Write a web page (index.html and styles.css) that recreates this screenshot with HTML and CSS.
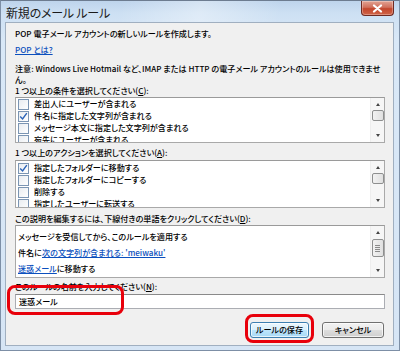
FILE: index.html
```html
<!DOCTYPE html>
<html lang="ja">
<head>
<meta charset="utf-8">
<link rel="stylesheet" href="styles.css">
</head>
<body>
<div class="window">
  <div class="titlebar">
    <span class="title">新規のメール ルール</span>
    <span class="close"><svg width="11" height="9" viewBox="0 0 11 9"><path d="M2 1.5 L9 7.5 M9 1.5 L2 7.5" stroke="#fff" stroke-width="2.2" stroke-linecap="round"/></svg></span>
  </div>
  <div class="client">
    <p class="row r1">POP 電子メール アカウントの新しいルールを作成します。</p>
    <p class="row r1"><a class="link">POP とは?</a></p>
    <p class="note">注意: Windows Live Hotmail など、IMAP または HTTP の電子メール アカウントのルールは使用できませ<br>ん。</p>
    <p class="label lc">1 つ以上の条件を選択してください(<u>C</u>):</p>
    <div class="listbox lb1">
      <ul class="items">
        <li><span class="cb"></span>差出人にユーザーが含まれる</li>
        <li><span class="cb on"><svg width="9" height="9" viewBox="0 0 9 9"><path d="M1.2 4.6 L3.6 7 L7.8 1.2" fill="none" stroke="#2a63b8" stroke-width="1.4"/></svg></span>件名に指定した文字列が含まれる</li>
        <li><span class="cb"></span>メッセージ本文に指定した文字列が含まれる</li>
        <li><span class="cb"></span>宛先にユーザーが含まれる</li>
      </ul>
      <div class="sb">
        <span class="arr up"></span>
        <span class="thumb"></span>
        <span class="fill"></span>
        <span class="arr dn"></span>
      </div>
    </div>
    <p class="label la">1 つ以上のアクションを選択してください(<u>A</u>):</p>
    <div class="listbox lb2">
      <ul class="items">
        <li><span class="cb on"><svg width="9" height="9" viewBox="0 0 9 9"><path d="M1.2 4.6 L3.6 7 L7.8 1.2" fill="none" stroke="#2a63b8" stroke-width="1.4"/></svg></span>指定したフォルダーに移動する</li>
        <li><span class="cb"></span>指定したフォルダーにコピーする</li>
        <li><span class="cb"></span>削除する</li>
        <li><span class="cb"></span>指定したユーザーに転送する</li>
      </ul>
      <div class="sb">
        <span class="arr up"></span>
        <span class="thumb"></span>
        <span class="fill"></span>
        <span class="arr dn"></span>
      </div>
    </div>
    <p class="label ld">この説明を編集するには、下線付きの単語をクリックしてください(<u>D</u>):</p>
    <div class="listbox desc">
      <div class="desc-text">
        <p>メッセージを受信してから、このルールを適用する</p>
        <p>件名に<a class="link">次の文字列が含まれる: 'meiwaku'</a></p>
        <p><a class="link">迷惑メール</a>に移動する</p>
      </div>
      <div class="sb sb-desc">
        <span class="arr up"></span>
        <span class="thumb big"><i></i><i></i><i></i><i></i></span>
        <span class="fill"></span>
        <span class="arr dn"></span>
      </div>
    </div>
    <p class="label ln">このルールの名前を入力してください(<u>N</u>):</p>
    <div class="input">迷惑メール</div>
    <div class="buttons">
      <span class="btn primary">ルールの保存</span>
      <span class="btn">キャンセル</span>
    </div>
  </div>
  <div class="mark mark1"></div>
  <div class="mark mark2"></div>
</div>
</body>
</html>
```
FILE: styles.css
```css
* { box-sizing: border-box; }
html, body { margin: 0; padding: 0; }
body {
  font-family: "Noto Sans CJK JP", "Noto Sans", sans-serif;
  font-size: 8.1px;
  font-weight: 500;
  font-feature-settings: "palt";
  color: #000;
  background: #fff;
}
p { margin: 0; }
.window {
  position: relative;
  width: 400px;
  height: 351px;
  border: 1px solid #7d8fa6;
  border-top-color: #6d7c90;
  background: linear-gradient(to bottom, #bed4ec 0px, #cde0f3 12px, #d9e8f7 40px, #d6e5f5 100%);
  display: flex;
  flex-direction: column;
}
.titlebar {
  height: 21px;
  flex: none;
  display: flex;
  justify-content: space-between;
  align-items: flex-start;
  background: linear-gradient(100deg, rgba(255,255,255,0.0) 30%, rgba(255,255,255,0.35) 50%, rgba(255,255,255,0) 70%);
}
.title {
  font-size: 12px;
  font-weight: 400;
  line-height: 12px;
  padding: 6px 0 0 5px;
  color: #1a1a1a;
  letter-spacing: -0.2px;
}
.close {
  width: 33px;
  height: 15px;
  margin-right: 5px;
  border: 1px solid #6e2a22;
  border-top: none;
  border-radius: 0 0 4px 4px;
  background: linear-gradient(to bottom, #e2a393 0%, #d0705c 45%, #c3462c 55%, #d06448 100%);
  display: flex;
  align-items: center;
  justify-content: center;
  box-shadow: inset 0 0 0 1px rgba(255,255,255,0.3);
}
.client {
  margin: 0 5px 4px 4px;
  flex: 1;
  border: 1px solid #a0afc0;
  background: #f0f0f0;
  padding: 3px 8px 0 9px;
  display: flex;
  flex-direction: column;
}
.row { line-height: 16px; height: 16px; white-space: nowrap; }
.link { color: #0b4fbd; text-decoration: underline; }
.note { line-height: 11px; margin-top: 5px; white-space: nowrap; }
.label { line-height: 12px; height: 12px; white-space: nowrap; }
.lc { line-height: 11px; height: 11px; margin-bottom: 1px; }
.listbox {
  width: 370px;
  border: 1px solid #a9a9a9;
  border-top-color: #9a9a9a;
  background: #fff;
  display: flex;
  overflow: hidden;
}
.lb1 { height: 46px; }
.lb2 { height: 48px; }
.la { margin-top: 4px; margin-bottom: 1px; }
.ld { margin-top: 5px; margin-bottom: 0; }
.items {
  list-style: none;
  margin: 0;
  padding: 0 0 0 1px;
  flex: 1;
}
.items li {
  height: 12px;
  line-height: 12px;
  display: flex;
  align-items: center;
  white-space: nowrap;
}
.lb2 .items { padding-top: 1px; }
.cb {
  width: 11px;
  height: 11px;
  border: 1px solid #7b95b3;
  background: linear-gradient(135deg, #e8ecf0, #fff);
  margin: 0 5px 0 1px;
  display: inline-flex;
  align-items: center;
  justify-content: center;
  flex: none;
}
.sb {
  width: 14px;
  flex: none;
  display: flex;
  flex-direction: column;
  align-items: center;
  background: #f6f6f6;
  border-left: 1px solid #eee;
  padding: 3px 0 2px;
}
.arr {
  width: 0; height: 0;
  border-left: 2.5px solid transparent;
  border-right: 2.5px solid transparent;
  flex: none;
}
.arr.up { border-bottom: 3px solid #444; margin-top: 2px; }
.arr.dn { border-top: 3px solid #444; margin-bottom: 3px; }
.thumb {
  width: 12px;
  height: 11px;
  margin-top: 4px;
  border: 1px solid #8e8f8f;
  border-radius: 2px;
  background: linear-gradient(to right, #f2f2f2, #e0e0e0);
  flex: none;
}
.thumb.big {
  height: 18px;
  margin-top: 5px;
  display: flex;
  flex-direction: column;
  align-items: center;
  justify-content: center;
  gap: 1px;
}
.thumb.big i { display: block; width: 5px; height: 1px; background: #8a8a8a; }
.fill { flex: 1; }
.desc { height: 53px; margin-top: 0; }
.desc-text { flex: 1; padding: 3px 0 0 2px; }
.desc-text p { line-height: 16px; height: 16px; white-space: nowrap; }
.ln { margin-top: 3px; margin-bottom: 1px; }
.input {
  width: 370px;
  height: 15px;
  border: 1px solid #abadb3;
  border-top-color: #8a8a8a;
  background: #fff;
  line-height: 13px;
  padding-left: 3px;
}
.buttons {
  display: flex;
  justify-content: flex-end;
  gap: 13px;
  margin-top: 13px;
  padding-right: 1px;
}
.btn {
  height: 16px;
  width: 62px;
  border: 1px solid #707070;
  border-radius: 3px;
  background: linear-gradient(to bottom, #f2f2f2 0%, #ebebeb 50%, #dddddd 51%, #cfcfcf 100%);
  box-shadow: inset 0 0 0 1px rgba(255,255,255,0.7);
  text-align: center;
  line-height: 14px;
}
.btn.primary {
  width: 59px;
  border-color: #3c7fb1;
  background: linear-gradient(to bottom, #eaf6fd 0%, #d9f0fc 50%, #bee6fd 51%, #a7d9f5 100%);
}
.mark {
  position: absolute;
  border: 3px solid #e8000b;
  border-radius: 8px;
}
.mark1 { left: 6px; top: 284px; width: 117px; height: 30px; }
.mark2 { left: 244px; top: 313px; width: 69px; height: 29px; }
```
